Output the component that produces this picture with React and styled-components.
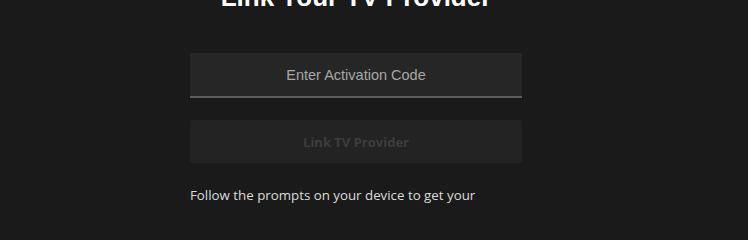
import React from "react";
import styled, { createGlobalStyle } from "styled-components";

const GlobalStyle = createGlobalStyle`
  html, body {
    margin: 0;
    padding: 0;
    background: #1a1a1a;
    overflow: hidden;
  }
`;

const Page = styled.div`
  width: 748px;
  height: 210px;
  background: #1a1a1a;
  overflow: hidden;
`;

const Column = styled.div`
  width: 332px;
  margin-left: 190px;
  display: flex;
  flex-direction: column;
`;

const Title = styled.h1`
  margin: -18px 0 0;
  font-family: "Liberation Sans", Arial, sans-serif;
  font-weight: 700;
  font-size: 26px;
  line-height: 30px;
  color: #ffffff;
  text-align: center;
`;

const CodeInput = styled.input`
  margin-top: 41px;
  height: 45px;
  box-sizing: border-box;
  border: none;
  border-bottom: 2px solid #5c5c5c;
  background: #262626;
  color: #e0e0e0;
  font-family: "Liberation Sans", Arial, sans-serif;
  font-size: 14.5px;
  text-align: center;
  outline: none;
  padding: 0 12px;

  &::placeholder {
    color: #a8a8a8;
  }
`;

const SubmitButton = styled.button`
  margin-top: 22px;
  height: 43px;
  border: none;
  border-radius: 2px;
  background: #232323;
  color: #3d3d3d;
  font-family: "Open Sans", sans-serif;
  font-weight: 700;
  font-size: 13px;
  cursor: default;
`;

const Help = styled.p`
  margin: 22px 0 0;
  font-family: "Open Sans", sans-serif;
  font-size: 13.3px;
  line-height: 20px;
  color: #dcdcdc;
`;

export default function App() {
  return (
    <Page>
      <GlobalStyle />
      <Column>
        <Title>Link Your TV Provider</Title>
        <CodeInput placeholder="Enter Activation Code" />
        <SubmitButton disabled>Link TV Provider</SubmitButton>
        <Help>
          Follow the prompts on your device to get your activation code.
        </Help>
      </Column>
    </Page>
  );
}
